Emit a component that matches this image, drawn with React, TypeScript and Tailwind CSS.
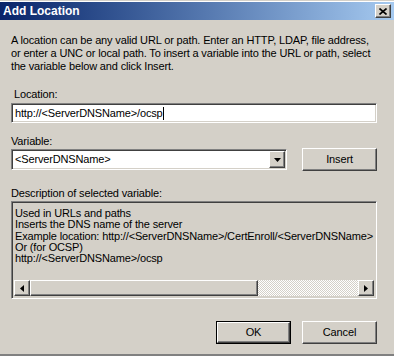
import React from "react";

const FONT = { fontFamily: '"Liberation Sans", Arial, sans-serif' };

const raised =
  "border border-t-white border-l-white border-r-[#404040] border-b-[#404040] shadow-[inset_-1px_-1px_#808080]";
const sunken =
  "border border-t-[#808080] border-l-[#808080] border-r-white border-b-white shadow-[inset_1px_1px_#404040,inset_-1px_-1px_#d4d0c8]";

function Tri({ dir }: { dir: "down" | "left" | "right" }) {
  if (dir === "down")
    return (
      <svg width="7" height="4" viewBox="0 0 7 4">
        <path d="M0 0h7L3.5 4z" fill="#000" />
      </svg>
    );
  return (
    <svg width="4" height="7" viewBox="0 0 4 7">
      <path d={dir === "left" ? "M4 0v7L0 3.5z" : "M0 0v7l4-3.5z"} fill="#000" />
    </svg>
  );
}

function Button({ label, isDefault }: { label: string; isDefault?: boolean }) {
  if (isDefault)
    return (
      <div className="w-[75px] h-[23px] border border-black">
        <div className={`${raised} h-full flex items-center justify-center`}>{label}</div>
      </div>
    );
  return (
    <div className={`${raised} w-[75px] h-[23px] flex items-center justify-center`}>{label}</div>
  );
}

export default function App() {
  return (
    <div
      className="w-[394px] h-[356px] bg-[#d4d0c8] flex flex-col text-[11px] leading-[13px] tracking-[-0.15px] whitespace-nowrap text-black border-t border-t-[#d4d0c8] border-b-2 border-b-[#808080] overflow-hidden"
      style={FONT}
    >
      <div className="border-t border-t-white" />
      {/* title bar */}
      <div className="h-[18px] shrink-0 flex items-center justify-between pl-[3px] pr-[3px] bg-gradient-to-r from-[#0a246a] to-[#a6caf0]">
        <span className="text-white font-bold text-[12px] tracking-normal">Add Location</span>
        <div className={`${raised} bg-[#d4d0c8] w-[16px] h-[14px] flex items-center justify-center`}>
          <svg width="8" height="7" viewBox="0 0 8 7">
            <path d="M0.5 0.5l7 6M7.5 0.5l-7 6" stroke="#000" strokeWidth="1.6" />
          </svg>
        </div>
      </div>

      <div className="flex flex-col pl-[11px] pr-[17px]">
        <p className="mt-[14px]">
          A location can be any valid URL or path. Enter an HTTP, LDAP, file address,
          <br />
          or enter a UNC or local path. To insert a variable into the URL or path, select
          <br />
          the variable below and click Insert.
        </p>

        <div className="mt-[15px] pl-[3px]">Location:</div>
        <div className={`${sunken} mt-[2px] h-[20px] bg-white flex items-center pl-[3px]`}>
          <span>http://&lt;ServerDNSName&gt;/ocsp</span>
          <span className="w-px h-[13px] bg-black" />
        </div>

        <div className="mt-[12px]">Variable:</div>
        <div className="flex items-center justify-between h-[23px]">
          <div className={`${sunken} w-[276px] h-[21px] bg-white flex items-center justify-between pl-[3px] pr-[1px]`}>
            <span>&lt;ServerDNSName&gt;</span>
            <div className={`${raised} bg-[#d4d0c8] w-[16px] h-[17px] flex items-center justify-center`}>
              <Tri dir="down" />
            </div>
          </div>
          <Button label="Insert" />
        </div>

        <div className="mt-[16px]">Description of selected variable:</div>
        <div className={`${sunken} mt-[1px] h-[98px] flex flex-col p-[2px]`}>
          <div className="flex-1 overflow-hidden pl-px pt-[4px] leading-[11.25px]">
            <div>Used in URLs and paths</div>
            <div>Inserts the DNS name of the server</div>
            <div>Example location: http://&lt;ServerDNSName&gt;/CertEnroll/&lt;ServerDNSName&gt;</div>
            <div>Or (for OCSP)</div>
            <div>http://&lt;ServerDNSName&gt;/ocsp</div>
          </div>
          <div className="h-[16px] flex">
            <div className={`${raised} bg-[#d4d0c8] w-[16px] flex items-center justify-center`}>
              <Tri dir="left" />
            </div>
            <div className={`${raised} bg-[#d4d0c8] w-[228px]`} />
            <div className="flex-1 bg-[repeating-conic-gradient(#ffffff_0_25%,#d4d0c8_0_50%)] bg-[length:2px_2px]" />
            <div className={`${raised} bg-[#d4d0c8] w-[16px] flex items-center justify-center`}>
              <Tri dir="right" />
            </div>
          </div>
        </div>

        <div className="mt-[22px] flex justify-end gap-[11px]">
          <Button label="OK" isDefault />
          <Button label="Cancel" />
        </div>
      </div>
    </div>
  );
}
